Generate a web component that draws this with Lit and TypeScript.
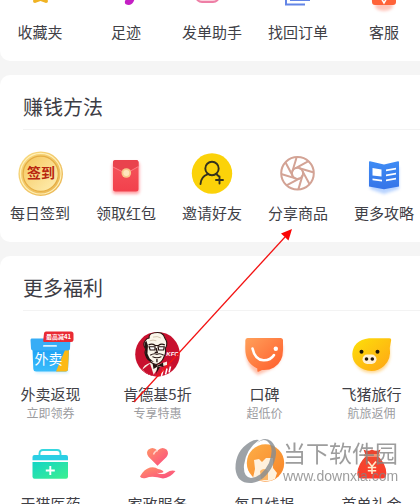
import { LitElement, html, svg, css, nothing, TemplateResult, SVGTemplateResult } from "lit";
import { customElement, property } from "lit/decorators.js";

interface Item {
  label: string;
  note?: string;
  icon: SVGTemplateResult;
}

const star = svg`<path d="M16 -9 H33 L30 -4 L32 1 Q32 3 30 3 L24.500 1 L19 3 Q17 3 17 1 L19 -4Z" fill="#f0b323"/>
  <path d="M20 -2 Q24 2 29 -2 L27 -3 H22Z" fill="#fde9a8"/>`;
const note = svg`<path d="M26 -6 H33 Q33 4 27 5 Q22 5 23 1 Q24 -1 26 -2Z" fill="#c41fc4"/>`;
const pinkBox = svg`<rect x="8" y="-16" width="23" height="18" rx="6" fill="#fbd0dc" stroke="#ee7fa6" stroke-width="2"/>`;
const blueStack = svg`<g fill="none" stroke="#6385e6" stroke-width="2"><path d="M12 -5 V4.500 H31"/><path d="M17 -5 V0 H35 V-5"/></g>`;
const orangeV = svg`<ellipse cx="24" cy="6" rx="9" ry="5" fill="#ff8a75" opacity=".5" filter="url(#soft)"/>
  <path d="M11.500 -8 H36 V2 Q36 5 33 5 H15 Q12 5 12 2Z" fill="#ff6238"/>
  <path d="M20.500 -3 L24 3 L27.500 -3" fill="none" stroke="#fff" stroke-width="1.500"/>`;

const coin = svg`<circle cx="24.700" cy="24.700" r="22.300" fill="url(#gold)"/>
  <circle cx="24.700" cy="24.700" r="20.300" fill="none" stroke="#fff0b8" stroke-width="1.200"/>
  <circle cx="24.700" cy="24.700" r="17.600" fill="url(#goldIn)" stroke="#e5ad43" stroke-width="1.200"/>
  <text x="25" y="29" text-anchor="middle" class="coin">签到</text>`;
const envelope = svg`<rect x="10.500" y="13" width="27" height="32" rx="3" fill="#ff8c91" opacity=".8" filter="url(#soft)"/>
  <rect x="11" y="11" width="25.500" height="31.500" rx="2.500" fill="url(#redEnv)"/>
  <path d="M11 13 Q11 11 13.500 11 H34 Q36.500 11 36.500 13 V17.500 L24 24.500 L11 18Z" fill="#e9434d"/>
  <path d="M11 18 L24 24.500 L36.500 17.500" fill="none" stroke="#ff8388" stroke-width=".9"/>
  <circle cx="24.300" cy="24" r="4.800" fill="#f8c88d"/><circle cx="24.300" cy="24" r="3" fill="#ffe5bd"/>`;
const invite = svg`<circle cx="24" cy="24.500" r="20.200" fill="#fbd209"/>
  <g fill="none" stroke="#35321d" stroke-width="1.900" stroke-linecap="round"><circle cx="24" cy="19.500" r="6.700"/>
  <path d="M12.500 35 Q13 27.500 19.500 25.300 M28.500 25.300 L30.500 27 M31.500 27.500 V34.500 M28 31 H35"/></g>`;
const aperture = svg`<g fill="none" stroke="#d3a395" stroke-width="2"><circle cx="23.500" cy="24.300" r="16.300"/>
  <circle cx="23.500" cy="24.300" r="5.600"/>
  ${[0, 45, 90, 135, 180, 225, 270, 315].map(
    (a) => svg`<path d="M21.300 19.300 L34.500 12.200" transform="rotate(${a} 23.500 24.300)"/>`
  )}</g>`;
const guide = svg`<path d="M10 18 H39 V40 L24 45 L10 40Z" fill="#7fb0ff" opacity=".55" filter="url(#soft)"/>
  <path d="M9 13 Q9 12 10 12.200 L24 15.500 L38 12.200 Q39 12 39 13 V37.500 L24 40.200 L9 37.500Z" fill="url(#blueBook)"/>
  <g fill="#fff"><path d="M12.500 19 L21.500 20.500 V27.500 L12.500 26.500Z"/><path d="M12.500 29.500 L22 30.700 V32.500 L12.500 31.300Z"/>
  <path d="M26 20.500 L36 18.700 V20.500 L26 22.300Z"/><path d="M26 25.500 L36 23.700 V25.500 L26 27.300Z"/><path d="M26 30.500 L36 28.700 V30.500 L26 32.300Z"/></g>`;

const takeout = svg`<path d="M7 24 H41 V43 H9Z" fill="#7cd0ff" opacity=".4" filter="url(#soft)"/>
  <path d="M5.500 19 H42 L41 39 Q41 41.500 38.500 41.500 H9 Q6.500 41.500 6.300 39Z" fill="url(#skyBox)"/>
  <path d="M38 20 H42 L41 39 Q41 41.500 38.500 41.500 H29Z" fill="#fcb914"/>
  <path d="M4.500 8.500 H42 Q43.500 8.500 43.400 10 L43 18.500 Q43 20.500 41 20.500 H6 Q4.200 20.500 4 18.500 L3.500 10Q3.500 8.500 4.500 8.500Z" fill="#37adf6"/>
  <rect x="16" y="15" width="14" height="1.800" rx=".9" fill="#d8f2ff"/>
  <text x="21.500" y="34" text-anchor="middle" class="box">外卖</text>
  <path d="M19 1.500 H44 Q46.500 1.500 46.500 4 V9.500 Q46.500 12 44 12 H17.500 Q16 12 16.200 10.500 L17 3.500 Q17.200 1.500 19 1.500Z" fill="#e92a33"/>
  <text x="31.500" y="9" text-anchor="middle" class="tag">最高减41</text>`;
const colonel = svg`<circle cx="23.500" cy="24.200" r="22.300" fill="#c8102e"/>
  <path d="M9 38 L16 32 H33 L39 35 Q34 46 23.500 46.500 Q14 46 8 40Z" fill="#d31736"/>
  <path d="M8.500 39.500 Q9 35 17 32.500 L23 35 L33 31.500 L33 35 L25 37 L19 45.500 Q12 43.500 8.500 39.500Z" fill="#f7f1e6"/>
  <path d="M8.500 39.500 L16 33.500 L20 45.800 Q12.500 44.500 8.500 39.500Z" fill="#c8102e"/>
  <g transform="translate(-4.500 1.500) scale(1.120 .93)">
  <path d="M17.500 7 Q17 2.500 22 1.500 Q30 -.5 31.500 7 Q35 13 32 18 Q33 23 30.500 28 Q29 33 24 35.500 Q18 34 16.500 28 Q12.500 25 14.500 19 Q11.500 14 14 10 Q15 7.500 17.500 7Z" fill="#fbf6ea" stroke="#2b1712" stroke-width="1"/>
  <path d="M14.500 19 Q12 13.500 15 10 L16.500 15 L16 24 L18 29 L22 33 L16.500 31 Q12.500 26 14.500 19Z" fill="#251310"/>
  <path d="M17 14.500 Q20 12.500 23 15 L26 15 Q28.500 12.500 31.500 14.500" fill="none" stroke="#251310" stroke-width="1.200"/>
  <path d="M17.500 16.500 H22.800 V20 H18.500Z M25.500 16.500 H31 L30.500 20 H26Z" fill="#fff" stroke="#251310" stroke-width="1.100"/>
  <path d="M23.800 18 L24.800 22.500 H22.500 M18.500 25.500 Q22 23 24.500 24.500 Q27 23 30.500 25.500 M20.500 27 Q24.500 29.500 28.500 27 M24.500 29.500 V33" fill="none" stroke="#251310" stroke-width="1.200"/>
  <path d="M18 10 Q21 8.500 24 10 M21 6 Q25 4.500 28 7" fill="none" stroke="#bca98f" stroke-width=".6"/>
  </g>
  <path d="M18.500 33 L23.500 35.500 L29 32.500 L29.500 37 L24.500 36 L19.500 39Z M23.500 36 L22 44 L26 37Z" fill="#251310"/>
  <path d="M29 40 L27.500 46 M33 38.500 L31.500 44.500 M36.500 36.500 L35 42.500" stroke="#fff" stroke-width="1.500"/>
  <text x="38.500" y="25.500" text-anchor="middle" class="kfc">KFC</text>`;
const smile = svg`<path d="M5 15 H42 Q43 35 26 41 L17 45 Q4 36 5 20Z" fill="#ff9a78" opacity=".6" filter="url(#soft)"/>
  <path d="M6.500 8 H39.500 Q42 8 42 10.500 V20 Q42 32 33 37.500 Q28 40.500 21 40 L17.500 41.800 Q16 42 16.300 40.300 V38.500 Q4.300 33 4.300 19 V10.500 Q4.300 8 6.500 8Z" fill="url(#mouth)"/>
  <path d="M11.500 18.500 Q14 30 22.500 30.300 Q29.500 30.500 33 25" fill="none" stroke="#fff" stroke-width="2.600" stroke-linecap="round"/>
  <circle cx="34.800" cy="18.800" r="2.200" fill="#fff"/>`;
const pig = svg`<path d="M6 27 Q9 14 24 14 H42 L42 27 Q39 43 23 43 Q8 42 6 27Z" fill="#ffc04d" opacity=".6" filter="url(#soft)"/>
  <path d="M21 8.200 H41.500 Q43.500 8.200 43.200 10 L41.800 18 Q43.500 29 36 36 Q29 42.300 19.500 40.600 Q4.500 36.500 4.300 24 Q5 10.500 21 8.200Z" fill="url(#pigSkin)"/>
  <circle cx="13.500" cy="21.800" r="2" fill="#1d1509"/><circle cx="29.500" cy="21.800" r="2" fill="#1d1509"/>
  <rect x="14.500" y="24.500" width="14" height="9.500" rx="4.700" fill="#fff0d4"/>
  <circle cx="18.500" cy="29" r="1.800" fill="#24170b"/><circle cx="24.300" cy="29" r="1.800" fill="#24170b"/>`;
const medicine = svg`<path d="M12.500 16 V13.500 Q12.500 10 16 10 H30 Q33.500 10 33.500 13.500 V16" fill="none" stroke="#35d7df" stroke-width="1.900"/>
  <path d="M7.500 15 H39 Q41 15 41 17 V20.300 H5.500 V17 Q5.500 15 7.500 15Z" fill="#2bcfe4"/>
  <path d="M5.500 22 H41 V36.500 Q41 38.700 39 38.700 H7.500 Q5.500 38.700 5.500 36.500Z" fill="url(#mint)"/>
  <path d="M23.300 26 V35 M18.800 30.500 H27.800" stroke="#fff" stroke-width="1.900"/>`;
const care = svg`<path d="M23.500 25.700 L14.500 16.700 Q11.500 12.500 14.500 9.500 Q19 6 23.500 10.500 Q28 6 32.500 9.500 Q35.500 13 32.500 17Z" fill="url(#heart)"/>
  <path d="M19.500 14.500 Q21 10.700 24 10.500" stroke="#ffd6cc" stroke-width="1.500" fill="none"/>
  <path d="M6 36.500 Q10 29 16 27.500 Q21 26.500 24 29 Q29 30 29.500 32 Q28 33.500 22.500 32.700 Q29 35.500 33 32.500 Q37 29.500 41.500 31 Q36 38 29 38.500 Q18 35.500 12 38Q7 39 6 36.500Z" fill="url(#heart)"/>`;
const news = svg`<circle cx="24.500" cy="23" r="18.700" fill="url(#orange)"/>
  <path d="M12 38 L14 29 L13 20 L18 19 L21 22 L25 18 H32 V28 L36 33 L34 39 Q24 44 12 38Z" fill="#fff1dd"/>
  <path d="M19 31 Q23 27 27 31 V40 H20Z" fill="#fbb565"/>`;
const moneyBag = svg`<path d="M15.500 9.500 Q20 12 24 9.500 Q28 12 32.500 9.500 L30.500 15 H17.500Z" fill="#ea442f"/>
  <rect x="16" y="14" width="16" height="2.500" rx="1" fill="#f89469"/>
  <path d="M17.500 16.500 H30.500 Q38 24 38.300 33 Q38.500 38.500 34 38.500 H14 Q9 38.500 9.300 33 Q10 24 17.500 16.500Z" fill="url(#bag)"/>
  <path d="M20 21.500 L24 26.500 L28 21.500 M24 26.500 V34 M19.800 27.500 H28.200 M19.800 30.800 H28.200" fill="none" stroke="#ffe9c9" stroke-width="1.600"/>`;

const tools: Item[] = [
  { label: "收藏夹", icon: star },
  { label: "足迹", icon: note },
  { label: "发单助手", icon: pinkBox },
  { label: "找回订单", icon: blueStack },
  { label: "客服", icon: orangeV },
];
const earning: Item[] = [
  { label: "每日签到", icon: coin },
  { label: "领取红包", icon: envelope },
  { label: "邀请好友", icon: invite },
  { label: "分享商品", icon: aperture },
  { label: "更多攻略", icon: guide },
];
const benefits: Item[] = [
  { label: "外卖返现", note: "立即领券", icon: takeout },
  { label: "肯德基5折", note: "专享特惠", icon: colonel },
  { label: "口碑", note: "超低价", icon: smile },
  { label: "飞猪旅行", note: "航旅返佣", icon: pig },
  { label: "天猫医药", icon: medicine },
  { label: "家政服务", icon: care },
  { label: "每日线报", icon: news },
  { label: "首单礼金", icon: moneyBag },
];

const gradient = (id: string, from: string, to: string, x2 = 1, y2 = 1) => svg`
  <linearGradient id=${id} x1="0" y1="0" x2=${x2} y2=${y2}>
    <stop offset="0" stop-color=${from}/><stop offset="1" stop-color=${to}/>
  </linearGradient>`;

const paints = svg`<defs>
  <filter id="soft" x="-30%" y="-30%" width="160%" height="160%"><feGaussianBlur stdDeviation="1.800"/></filter>
  ${gradient("gold", "#f9dc83", "#eab450")}
  ${gradient("goldIn", "#f5c65c", "#fff0b5")}
  ${gradient("redEnv", "#f5565d", "#f2404c", 0)}
  ${gradient("blueBook", "#3f8cf5", "#3574e8", 0)}
  ${gradient("skyBox", "#1fa2f5", "#39bcfb", 0)}
  ${gradient("mouth", "#ffa05a", "#ff5a2a")}
  ${gradient("pigSkin", "#fde009", "#ffa416")}
  ${gradient("mint", "#14d5c6", "#3df08f")}
  ${gradient("heart", "#ff9468", "#fb4a80")}
  ${gradient("orange", "#fcae48", "#f98427")}
  ${gradient("bag", "#ef4a30", "#ff3a2a", 0)}
</defs>`;

@customElement("entry-grid")
export class EntryGrid extends LitElement {
  @property({ attribute: false }) items: Item[] = [];
  @property({ type: Number }) columns = 5;
  @property({ type: Boolean }) clipped = false;

  static styles = css`
    :host {
      display: block;
    }
    .grid {
      display: grid;
      row-gap: 19px;
    }
    .five {
      grid-template-columns: repeat(5, 1fr);
      margin: 0 -7px 0 -3px;
    }
    .four {
      grid-template-columns: repeat(4, 1fr);
      margin: 0 -5px 0 -3px;
    }
    .entry {
      display: flex;
      flex-direction: column;
      align-items: center;
      color: #404046;
      text-decoration: none;
      white-space: nowrap;
    }
    .icon {
      display: block;
      width: 48px;
      margin-bottom: 6px;
      overflow: hidden;
    }
    .label {
      font-size: 15px;
      line-height: 20px;
      margin-bottom: 1px;
    }
    .note {
      font-size: 12px;
      line-height: 16px;
      color: #9c9c9f;
    }
    .coin {
      font-size: 14px;
      font-weight: 700;
      fill: #b8260f;
    }
    .box {
      font-size: 14px;
      fill: #fff;
    }
    .tag {
      font-size: 6px;
      font-weight: 700;
      fill: #fff;
    }
    .kfc {
      font: italic 700 6px "Liberation Sans", sans-serif;
      fill: #fff;
    }
  `;

  render(): TemplateResult {
    const height = this.clipped ? 16 : 48;
    return html`<nav class="grid ${this.columns === 5 ? "five" : "four"}">
      ${this.items.map(
        (item) => html`<a class="entry" href="#">
          <svg class="icon" height=${height} viewBox="0 0 48 ${height}" aria-hidden="true">${paints}${item.icon}</svg>
          <span class="label">${item.label}</span>
          ${item.note ? html`<span class="note">${item.note}</span>` : nothing}
        </a>`
      )}
    </nav>`;
  }
}

@customElement("app-root")
export class AppRoot extends LitElement {
  static styles = css`
    :host {
      display: block;
      position: relative;
      height: 100vh;
      overflow: hidden;
      background: #f5f5f5;
      font-family: "Noto Sans CJK SC", sans-serif;
    }
    .page {
      display: flex;
      flex-direction: column;
      gap: 14px;
    }
    .card {
      background: #fff;
      border-radius: 10px 0 0 10px;
      padding-bottom: 18px;
      overflow: hidden;
    }
    .first {
      border-top-left-radius: 0;
    }
    .title {
      margin: 0 0 19px 23px;
      padding: 18px 0 8px;
      border-bottom: 1px solid #f3f3f3;
      font-size: 20px;
      line-height: 28px;
      font-weight: 400;
      color: #3c3c44;
    }
    .arrow {
      position: absolute;
      left: 130px;
      top: 224px;
    }
    .watermark {
      position: absolute;
      left: 234px;
      top: 436px;
      display: flex;
      gap: 5px;
      color: #858585;
      opacity: 0.8;
      white-space: nowrap;
    }
    .site {
      display: flex;
      flex-direction: column;
    }
    .name {
      font-size: 23px;
      line-height: 32px;
      font-weight: 400;
    }
    .url {
      font: 14px/16px "Liberation Sans", sans-serif;
    }
  `;

  render(): TemplateResult {
    return html`
      <main class="page">
        <section class="card first">
          <entry-grid .items=${tools} clipped></entry-grid>
        </section>
        <section class="card">
          <h2 class="title">赚钱方法</h2>
          <entry-grid .items=${earning}></entry-grid>
        </section>
        <section class="card">
          <h2 class="title">更多福利</h2>
          <entry-grid .items=${benefits} .columns=${4}></entry-grid>
        </section>
      </main>
      <svg class="arrow" width="168" height="182" viewBox="0 0 168 182" aria-hidden="true">
        <path d="M4 178 L155 13" stroke="#f31212" stroke-width="1.200" />
        <path d="M162 5 L151 9.500 L158.500 16.500Z" fill="#fa0505" />
      </svg>
      <div class="watermark">
        <svg width="44" height="50" viewBox="0 0 44 50" aria-hidden="true">
          <path
            d="M25 4 Q12 13 10 29 Q9 41 17 42 Q28 41 35 27 Q41 11 33 5 Q29 2 23 7 Q30 0 37 5 Q46 13 39 29 Q31 45 18 47 Q3 48 1.500 33 Q1 15 16 6 Q21 3 25 4Z"
            fill="#858c92"
          />
        </svg>
        <div class="site">
          <span class="name">当下软件园</span>
          <span class="url">www.downxia.com</span>
        </div>
      </div>
    `;
  }
}
